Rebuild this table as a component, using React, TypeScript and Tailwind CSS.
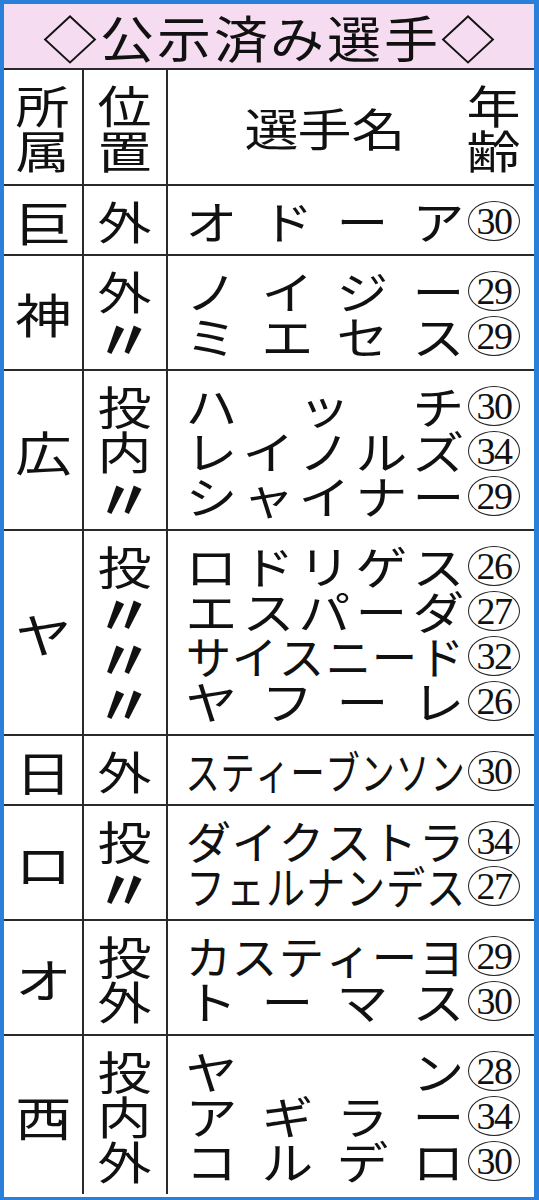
const rows: { team: string; players: [string, string, number][] }[] = [
  { team: "巨", players: [["外", "オドーア", 30]] },
  { team: "神", players: [["外", "ノイジー", 29], ["〃", "ミエセス", 29]] },
  {
    team: "広",
    players: [
      ["投", "ハッチ", 30],
      ["内", "レイノルズ", 34],
      ["〃", "シャイナー", 29],
    ],
  },
  {
    team: "ヤ",
    players: [
      ["投", "ロドリゲス", 26],
      ["〃", "エスパーダ", 27],
      ["〃", "サイスニード", 32],
      ["〃", "ヤフーレ", 26],
    ],
  },
  { team: "日", players: [["外", "スティーブンソン", 30]] },
  { team: "ロ", players: [["投", "ダイクストラ", 34], ["〃", "フェルナンデス", 27]] },
  { team: "オ", players: [["投", "カスティーヨ", 29], ["外", "トーマス", 30]] },
  {
    team: "西",
    players: [
      ["投", "ヤン", 28],
      ["内", "アギラー", 34],
      ["外", "コルデロ", 30],
    ],
  },
]

// cell width / horizontal scale per name length (wide newspaper face, squeezed for long names)
const fit: Record<number, [string, string]> = {
  6: ["w-[46.6px]", "scale-x-[1.01]"],
  7: ["w-[40px]", "scale-x-[0.87]"],
  8: ["w-[35px]", "scale-x-[0.76]"],
}

function Name({ name }: { name: string }) {
  const chars = Array.from(name)
  const [cell, squeeze] = fit[chars.length] ?? ["w-[53px]", "scale-x-[1.15]"]
  return (
    <div className="flex w-[280px] justify-between">
      {chars.map((c, i) => (
        <span key={i} className={`flex justify-center ${cell}`}>
          <span className={`inline-block ${squeeze}`}>{c}</span>
        </span>
      ))}
    </div>
  )
}

function Wide({ children }: { children: string }) {
  if (children === "〃") {
    // ditto mark is set heavier and larger in the original
    return <span className="inline-block scale-[1.25] font-bold">{children}</span>
  }
  return <span className="inline-block scale-x-[1.2]">{children}</span>
}

function Age({ age }: { age: number }) {
  return (
    <span className="flex h-[40px] w-[52px] items-center justify-center rounded-[50%] border-[1.5px] border-[#222]">
      <span className="font-['Liberation_Serif',serif] text-[38px] leading-none tracking-[-1.5px]">{age}</span>
    </span>
  )
}

export default function App() {
  return (
    <div className="h-[1200px] w-[539px] bg-[#2a7fdb] pb-[3px] pl-[4px] pr-[5px] pt-[4px] font-['Noto_Sans_CJK_JP',sans-serif] text-[#111]">
      <div className="flex h-full flex-col bg-white">
        {/* title */}
        <div className="flex h-[64px] items-center justify-center bg-[#f6dcf0]">
          <div className="flex w-[452px] justify-between text-[50px] leading-none">
            {Array.from("◇公示済み選手◇").map((c, i) => (
              <span key={i} className="flex w-[54px] justify-center">
                <span className="inline-block scale-x-[1.08]">{c}</span>
              </span>
            ))}
          </div>
        </div>

        {/* header */}
        <div className="flex border-t-2 border-[#2a2a2a] text-[45px] leading-[45px]">
          <div className="flex w-[80px] flex-col items-center justify-center border-r-2 border-[#2a2a2a] py-[12px]">
            <Wide>所</Wide>
            <Wide>属</Wide>
          </div>
          <div className="flex w-[84px] flex-col items-center justify-center border-r-2 border-[#2a2a2a] py-[12px]">
            <Wide>位</Wide>
            <Wide>置</Wide>
          </div>
          <div className="flex flex-1 items-center pl-[17px]">
            <div className="flex w-[280px] justify-center gap-[8px]">
              <Wide>選</Wide>
              <Wide>手</Wide>
              <Wide>名</Wide>
            </div>
            <div className="ml-[3px] flex w-[52px] flex-col items-center">
              <Wide>年</Wide>
              <Wide>齢</Wide>
            </div>
          </div>
        </div>

        {/* rows */}
        {rows.map((r) => (
          <div key={r.team} className="flex border-t-2 border-[#2a2a2a] text-[45px] leading-[45px]">
            <div className="flex w-[80px] items-center justify-center border-r-2 border-[#2a2a2a] text-[47px]">
              <Wide>{r.team}</Wide>
            </div>
            <div className="flex w-[84px] flex-col items-center border-r-2 border-[#2a2a2a] pb-[11px] pt-[12px]">
              {r.players.map((p, i) => (
                <Wide key={i}>{p[0]}</Wide>
              ))}
            </div>
            <div className="flex flex-1 flex-col pb-[11px] pl-[17px] pt-[12px]">
              {r.players.map((p, i) => (
                <div key={i} className="flex h-[45px] items-center">
                  <Name name={p[1]} />
                  <div className="ml-[3px]">
                    <Age age={p[2]} />
                  </div>
                </div>
              ))}
            </div>
          </div>
        ))}
      </div>
    </div>
  )
}
